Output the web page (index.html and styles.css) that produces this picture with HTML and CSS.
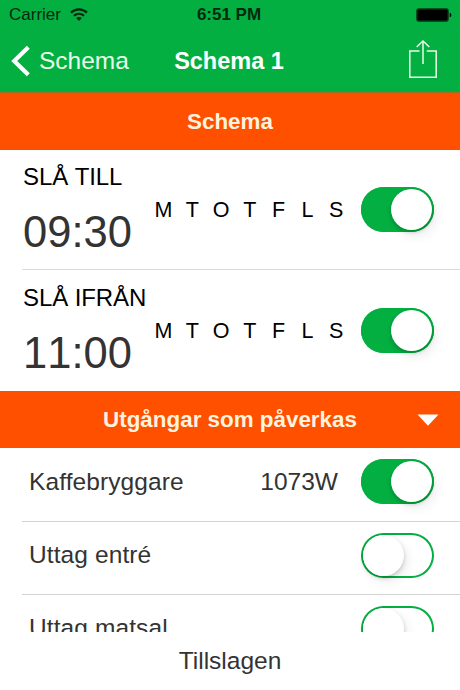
FILE: index.html
```html
<!DOCTYPE html>
<html lang="sv">

<head>
    <meta charset="UTF-8">
    <meta name="viewport" content="width=device-width, initial-scale=1.0">
    <title>Schema 1</title>
    <link rel="stylesheet" href="styles.css">
</head>

<body>
    <header>
        <div class="status-bar">
            <div class="carrier">
                <span>Carrier</span>
                <svg width="18" height="14" viewBox="0 0 18 14" fill="none" stroke="#03280f" stroke-width="2.2">
                    <path d="M1 4.6C5.5.3 12.5.3 17 4.6" />
                    <path d="M4 7.8c2.9-2.7 7.1-2.7 10 0" />
                    <path d="M6.2 10.1c1.7-1.5 3.9-1.5 5.6 0L9 12.9z" fill="#03280f" stroke="none" />
                </svg>
            </div>
            <span class="clock">6:51 PM</span>
            <svg class="battery" width="36" height="14" viewBox="0 0 36 14">
                <rect x=".5" y=".5" width="32" height="13" rx="2" fill="none" stroke="#04501c" />
                <rect x="1.2" y="1.2" width="30.6" height="11.6" rx="1" fill="#000" />
                <path d="M33.7 4.7c2.2.6 2.2 4 0 4.6z" fill="#000" />
            </svg>
        </div>
        <nav>
            <a class="back" href="#">
                <svg width="19" height="32" viewBox="0 0 19 32" fill="none" stroke="#fff" stroke-width="4.2">
                    <path d="M17.3 2.2L3.2 16l14.1 13.8" />
                </svg>
                <span>Schema</span>
            </a>
            <h1>Schema 1</h1>
            <a class="share" href="#">
                <svg width="30" height="40" viewBox="0 0 30 40" fill="none" stroke="#e9fbe8" stroke-width="1.5">
                    <path d="M11.5 12H1.8v26.2h26.4V12h-9.4" />
                    <path d="M15 25V2.2M8.7 8L15 2l6.3 6" />
                </svg>
            </a>
        </nav>
    </header>

    <main>
        <h2 class="section-title">Schema</h2>
        <div class="schedule">
            <div class="schedule-time">
                <span class="schedule-label">SLÅ TILL</span>
                <span class="time">09:30</span>
            </div>
            <div class="days">
                <span>M</span><span>T</span><span>O</span><span>T</span><span>F</span><span>L</span><span>S</span>
            </div>
            <div class="switch on"><div class="knob"></div></div>
        </div>
        <div class="schedule">
            <div class="schedule-time">
                <span class="schedule-label">SLÅ IFRÅN</span>
                <span class="time">11:00</span>
            </div>
            <div class="days">
                <span>M</span><span>T</span><span>O</span><span>T</span><span>F</span><span>L</span><span>S</span>
            </div>
            <div class="switch on"><div class="knob"></div></div>
        </div>

        <h2 class="section-title outputs-title">
            <span>Utgångar som påverkas</span>
            <svg class="arrow" width="22" height="12" viewBox="0 0 22 12">
                <path d="M.5.5h21L11 11.7z" fill="#fff" />
            </svg>
        </h2>
        <div class="output first">
            <span class="output-name">Kaffebryggare</span>
            <span class="watt">1073W</span>
            <div class="switch on"><div class="knob"></div></div>
        </div>
        <div class="output">
            <span class="output-name">Uttag entré</span>
            <div class="switch"><div class="knob"></div></div>
        </div>
        <div class="output">
            <span class="output-name">Uttag matsal</span>
            <div class="switch"><div class="knob"></div></div>
        </div>
    </main>

    <footer>Tillslagen</footer>
</body>

</html>
```
FILE: styles.css
```css
* {
    box-sizing: border-box;
}

body {
    font-family: "Liberation Sans", Arial, sans-serif;
    font-size: 24.5px;
    color: #333;
    background-color: #fff;
    margin: 0;
    height: 690px;
    display: flex;
    flex-direction: column;
    overflow: hidden;
}

header {
    background-color: #03af41;
    height: 93px;
    flex-shrink: 0;
    border-bottom: 1px solid #a4701c;
}

.status-bar {
    display: grid;
    grid-template-columns: 1fr auto 1fr;
    align-items: center;
    height: 30px;
    padding: 0 8px;
    font-size: 17px;
    color: #03280f;
}

.carrier {
    display: flex;
    align-items: center;
    gap: 9px;
    padding-left: 1px;
}

.clock {
    font-weight: bold;
    margin-right: 2px;
}

.battery {
    justify-self: end;
}

nav {
    display: grid;
    grid-template-columns: 1fr auto 1fr;
    align-items: center;
    height: 62px;
    padding: 0 22px 0 11px;
}

nav a {
    color: #e9fbe8;
    text-decoration: none;
}

.back {
    display: flex;
    align-items: center;
    gap: 9px;
}

h1 {
    margin: 0 0 0 9px;
    font-size: 23.5px;
    color: #fff;
}

.share {
    justify-self: end;
    height: 40px;
    margin-bottom: 4px;
}

.share svg {
    display: block;
}

main {
    height: 539px;
    flex-shrink: 0;
    overflow: hidden;
}

.section-title {
    display: flex;
    align-items: center;
    justify-content: center;
    height: 57px;
    margin: 0;
    background-color: #ff5000;
    color: #fff3df;
    font-size: 22.4px;
}

.outputs-title {
    position: relative;
}

.arrow {
    position: absolute;
    right: 21px;
    top: 23px;
}

.schedule {
    display: flex;
    align-items: center;
    height: 120px;
    margin-left: 22px;
    padding: 0 26px 0 1px;
    border-bottom: 1px solid #dcdcdc;
}

.schedule + .schedule {
    height: 121px;
    border-bottom: none;
}

.schedule-time {
    display: flex;
    flex-direction: column;
    width: 127px;
    padding-top: 1px;
    font-kerning: none;
}

.schedule-label {
    color: #000;
    font-size: 24px;
    letter-spacing: -0.1px;
    line-height: 28px;
    white-space: nowrap;
}

.time {
    font-size: 43.5px;
    line-height: 50px;
    margin-top: 16px;
}

.days {
    display: flex;
    color: #000;
    font-size: 21.5px;
    margin-left: -1px;
    padding-top: 2px;
}

.days span {
    width: 28.8px;
    text-align: center;
}

.switch {
    width: 73px;
    height: 45px;
    margin-left: auto;
    padding: 2px;
    border-radius: 23px;
    box-shadow: inset 0 0 0 2px #03af41;
}

.switch.on {
    background-color: #03af41;
}

.knob {
    width: 41px;
    height: 41px;
    border-radius: 50%;
    background-color: #fff;
    box-shadow: 0 2px 4px rgba(0, 0, 0, 0.2), 4px 6px 12px rgba(0, 0, 0, 0.07);
}

.on .knob {
    margin-left: 28px;
}

.output {
    display: flex;
    align-items: center;
    height: 73px;
    margin-left: 22px;
    padding: 0 26px 6px 7px;
    border-bottom: 1px solid #d3d3d3;
}

.output.first {
    height: 74px;
}

.output-name {
    letter-spacing: 0.1px;
}

.watt {
    margin-left: auto;
}

.watt + .switch {
    margin-left: 23px;
}

footer {
    flex: 1;
    background-color: #fff;
    text-align: center;
    line-height: 58px;
}
```
